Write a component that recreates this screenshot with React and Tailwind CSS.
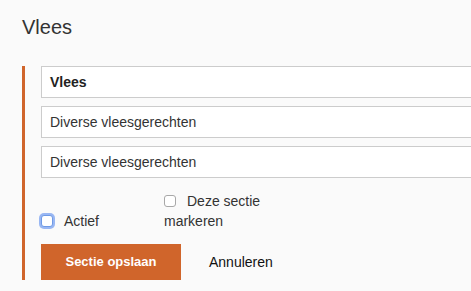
export default function App() {
  return (
    <div className="min-h-screen w-full overflow-hidden bg-[#fafafa] font-['Liberation_Sans',Arial,sans-serif] text-[#333] pt-[15px] pl-[22px]">
      <h1 className="text-[20px] leading-[24px] font-normal text-[#333]">Vlees</h1>
      <div className="mt-[27px] border-l-[3px] border-[#d0652b] pl-[16px] w-[520px]">
        <div className="flex flex-col gap-[8px]">
          <div className="h-[32px] w-[480px] border border-[#cccccc] bg-white px-[8px] flex items-center text-[14px] font-bold text-[#222]">
            Vlees
          </div>
          <div className="h-[32px] w-[480px] border border-[#cccccc] bg-white px-[8px] flex items-center text-[14px] text-[#333]">
            Diverse vleesgerechten
          </div>
          <div className="h-[32px] w-[480px] border border-[#cccccc] bg-white px-[8px] flex items-center text-[14px] text-[#333]">
            Diverse vleesgerechten
          </div>
        </div>
        <div className="mt-[13px] flex items-end text-[14px] leading-[20px] text-[#333]">
          <label className="w-[123px] flex items-center">
            <span className="inline-block w-[12px] h-[12px] rounded-[3px] border border-[#6f9ae6] bg-white shadow-[0_0_0_2px_rgba(120,160,240,0.75)]"></span>
            <span className="ml-[11px]">Actief</span>
          </label>
          <label className="w-[112px]">
            <span className="inline-block align-[-1px] w-[12px] h-[12px] rounded-[3px] border border-[#a8a8a8] bg-white mr-[11px]"></span>
            Deze sectie markeren
          </label>
        </div>
        <div className="mt-[13px] flex items-center">
          <button className="w-[140px] h-[36px] bg-[#d0652b] text-white text-[13px] font-bold">
            Sectie opslaan
          </button>
          <span className="ml-[28px] text-[14px] text-[#111]">Annuleren</span>
        </div>
      </div>
    </div>
  );
}
